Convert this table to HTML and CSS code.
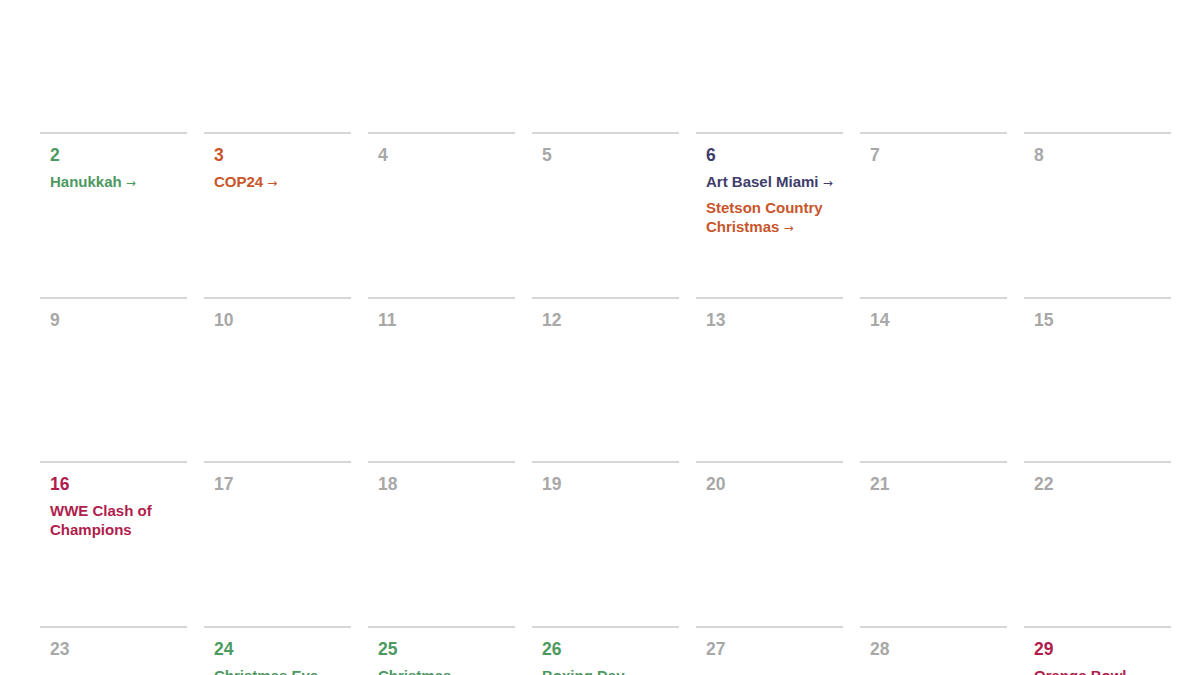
FILE: index.html
```html
<!DOCTYPE html>
<html lang="en">
<head>
    <meta charset="UTF-8">
    <meta name="viewport" content="width=device-width, initial-scale=1.0">
    <title>December Calendar</title>
    <link rel="stylesheet" href="styles.css">
</head>
<body>
    <div class="calendar">
        <div class="day green">
            <div class="date">2</div>
            <a class="event">Hanukkah <span class="arrow">→</span></a>
        </div>
        <div class="day orange">
            <div class="date">3</div>
            <a class="event">COP24 <span class="arrow">→</span></a>
        </div>
        <div class="day"><div class="date">4</div></div>
        <div class="day"><div class="date">5</div></div>
        <div class="day purple">
            <div class="date">6</div>
            <a class="event">Art Basel Miami <span class="arrow">→</span></a>
            <a class="event orange">Stetson Country Christmas <span class="arrow">→</span></a>
        </div>
        <div class="day"><div class="date">7</div></div>
        <div class="day"><div class="date">8</div></div>

        <div class="day"><div class="date">9</div></div>
        <div class="day"><div class="date">10</div></div>
        <div class="day"><div class="date">11</div></div>
        <div class="day"><div class="date">12</div></div>
        <div class="day"><div class="date">13</div></div>
        <div class="day"><div class="date">14</div></div>
        <div class="day"><div class="date">15</div></div>

        <div class="day crimson">
            <div class="date">16</div>
            <a class="event">WWE Clash of Champions</a>
        </div>
        <div class="day"><div class="date">17</div></div>
        <div class="day"><div class="date">18</div></div>
        <div class="day"><div class="date">19</div></div>
        <div class="day"><div class="date">20</div></div>
        <div class="day"><div class="date">21</div></div>
        <div class="day"><div class="date">22</div></div>

        <div class="day"><div class="date">23</div></div>
        <div class="day green">
            <div class="date">24</div>
            <a class="event">Christmas Eve</a>
        </div>
        <div class="day green">
            <div class="date">25</div>
            <a class="event">Christmas</a>
        </div>
        <div class="day green">
            <div class="date">26</div>
            <a class="event">Boxing Day</a>
        </div>
        <div class="day"><div class="date">27</div></div>
        <div class="day"><div class="date">28</div></div>
        <div class="day crimson">
            <div class="date">29</div>
            <a class="event">Orange Bowl</a>
        </div>
    </div>
</body>
</html>
```

FILE: styles.css
```css
body {
    margin: 0;
    padding: 0;
    background-color: #ffffff;
    font-family: "Liberation Sans", Arial, sans-serif;
    color: #999999;
    overflow: hidden;
}

.calendar {
    display: grid;
    grid-template-columns: repeat(7, 147px);
    grid-auto-rows: 164.6px;
    column-gap: 17px;
    padding: 132px 0 0 40px;
}

.day {
    border-top: 2px solid #d6d6d6;
    padding: 11px 10px 0;
    display: flex;
    flex-direction: column;
    align-items: flex-start;
}

.date {
    font-size: 17.5px;
    font-weight: bold;
    line-height: 20px;
    color: #a8a8a8;
    margin-bottom: 7px;
}

.event {
    display: block;
    font-size: 15px;
    font-weight: bold;
    line-height: 19px;
    margin-bottom: 5px;
}

.arrow {
    font-size: 12px;
    font-family: "DejaVu Sans", sans-serif;
    font-weight: normal;
}

.green .date, .green .event { color: #4c9a5f; }
.orange .date, .orange .event { color: #c9552b; }
.purple .date, .purple .event { color: #3e3d6b; }
.purple .event.orange { color: #c9552b; }
.crimson .date, .crimson .event { color: #b01d4c; }
```
